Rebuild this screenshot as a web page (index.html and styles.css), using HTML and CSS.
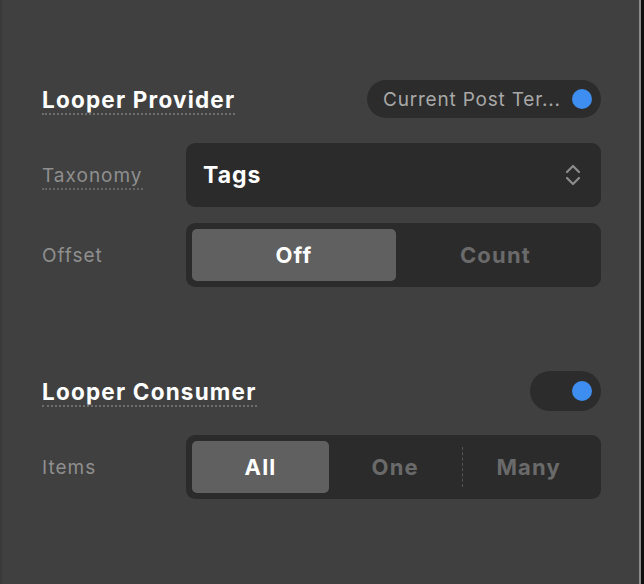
FILE: index.html
```html
<!DOCTYPE html>
<html>
<head>
<meta charset="utf-8">
<link rel="stylesheet" href="styles.css">
</head>
<body>
<div class="panel">
  <div class="section">
    <div class="head-row">
      <span class="heading">Looper Provider</span>
      <div class="pill">
        <span class="pill-text">Current Post Ter...</span>
        <span class="dot"></span>
      </div>
    </div>
    <div class="row">
      <div class="label"><span class="dotted">Taxonomy</span></div>
      <div class="control select">
        <span class="select-value">Tags</span>
        <svg class="chev" width="16" height="22" viewBox="0 0 16 22">
          <path d="M2 8 L8 2 L14 8" fill="none" stroke="#8c8c8c" stroke-width="2.2" stroke-linecap="round" stroke-linejoin="round"/>
          <path d="M2 14 L8 20 L14 14" fill="none" stroke="#8c8c8c" stroke-width="2.2" stroke-linecap="round" stroke-linejoin="round"/>
        </svg>
      </div>
    </div>
    <div class="row">
      <div class="label">Offset</div>
      <div class="control seg">
        <span class="opt active">Off</span>
        <span class="opt">Count</span>
      </div>
    </div>
  </div>

  <div class="section consumer">
    <div class="head-row">
      <span class="heading">Looper Consumer</span>
      <div class="toggle"><span class="dot"></span></div>
    </div>
    <div class="row">
      <div class="label">Items</div>
      <div class="control seg three">
        <span class="opt active">All</span>
        <span class="opt">One</span>
        <span class="opt divided">Many</span>
      </div>
    </div>
  </div>
</div>
</body>
</html>
```

FILE: styles.css
```css
* { box-sizing: border-box; }
html, body {
  margin: 0;
  height: 100%;
  background: #0e0e0e;
}
body {
  font-family: Inter, "Liberation Sans", sans-serif;
  overflow: hidden;
}
.panel {
  width: 641px;
  height: 584px;
  background: #404040;
  border-left: 2px solid #3a3a3a;
  border-right: 2px solid #8a8a8a;
  padding: 80px 38px 0 40px;
}
.section {
  display: flex;
  flex-direction: column;
}
.consumer {
  margin-top: 84px;
}
.head-row {
  display: flex;
  align-items: center;
  justify-content: space-between;
  height: 38px;
}
.consumer .head-row { height: 40px; }
.heading {
  color: #ffffff;
  font-weight: 700;
  font-size: 22.5px;
  letter-spacing: 1.2px;
  line-height: 26px;
  padding-top: 3px;
  border-bottom: 2px dotted #6e6e6e;
}
.pill {
  display: flex;
  align-items: center;
  height: 38px;
  width: 234px;
  border-radius: 19px;
  background: #2c2c2c;
  padding: 0 9px 0 16px;
  justify-content: space-between;
}
.pill-text {
  color: #a8a8a8;
  font-size: 19px;
  letter-spacing: 0.8px;
}
.dot {
  width: 20px;
  height: 20px;
  border-radius: 50%;
  background: #3d8ef0;
}
.toggle {
  width: 71px;
  height: 40px;
  border-radius: 20px;
  background: #2c2c2c;
  display: flex;
  align-items: center;
  justify-content: flex-end;
  padding-right: 9px;
}
.row {
  display: flex;
  align-items: center;
  margin-top: 25px;
}
.row + .row { margin-top: 16px; }
.consumer .row { margin-top: 24px; }
.label {
  width: 144px;
  flex: none;
  color: #8f8f8f;
  font-size: 19px;
  letter-spacing: 1px;
}
.dotted {
  padding-bottom: 1px;
  border-bottom: 2px dotted #666666;
}
.control {
  flex: 1;
  height: 64px;
  border-radius: 9px;
  background: #2b2b2b;
}
.select {
  display: flex;
  align-items: center;
  justify-content: space-between;
  padding: 0 20px 0 17px;
}
.select-value {
  color: #ffffff;
  font-weight: 700;
  font-size: 23px;
  letter-spacing: 1px;
}
.seg {
  display: flex;
  padding: 6px;
}
.opt {
  flex: 1;
  display: flex;
  align-items: center;
  justify-content: center;
  border-radius: 5px;
  color: #6a6a6a;
  font-weight: 700;
  font-size: 22px;
  letter-spacing: 1.2px;
}
.opt.active {
  background: #606060;
  color: #ffffff;
}
.seg .opt.active { flex: 0 0 204px; }
.seg.three .opt.active { flex: 0 0 137px; }
.opt.divided {
  border-left: 1px dashed #555555;
  border-radius: 0;
  margin: 6px 0;
}
```
